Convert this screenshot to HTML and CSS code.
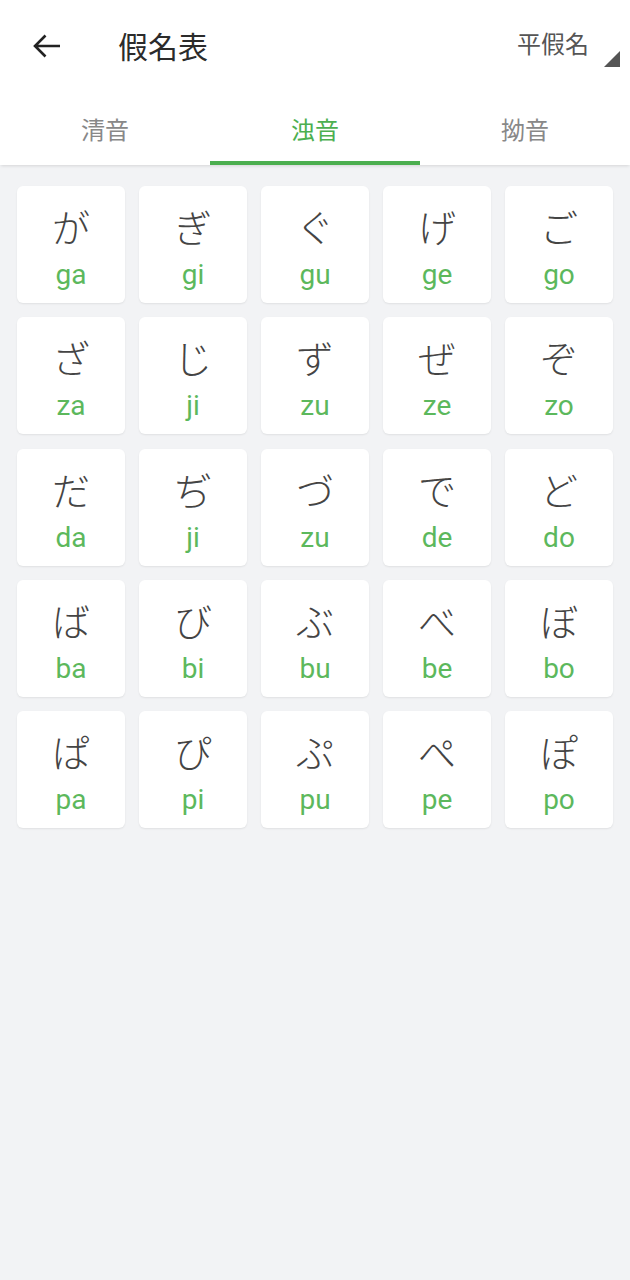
FILE: index.html
```html
<!DOCTYPE html>
<html lang="ja">
<head>
<meta charset="utf-8">
<title>假名表</title>
<link rel="stylesheet" href="styles.css">
</head>
<body>
<header class="appbar">
  <div class="back">
    <svg width="30" height="26" viewBox="0 0 30 26"><path d="M28 13 H3 M13.5 2.5 L3 13 L13.5 23.5" fill="none" stroke="#222" stroke-width="2.6" stroke-linecap="butt" stroke-linejoin="miter"/></svg>
  </div>
  <div class="title">假名表</div>
  <div class="spacer"></div>
  <div class="picker">
    <span class="picker-label">平假名</span>
    <svg class="picker-tri" width="16" height="16" viewBox="0 0 16 16"><polygon points="16,0 16,16 0,16" fill="#555"/></svg>
  </div>
</header>
<nav class="tabs">
  <div class="tab">清音</div>
  <div class="tab active">浊音</div>
  <div class="tab">拗音</div>
</nav>
<main class="grid">
  <div class="card"><span class="kana">が</span><span class="roma">ga</span></div>
  <div class="card"><span class="kana">ぎ</span><span class="roma">gi</span></div>
  <div class="card"><span class="kana">ぐ</span><span class="roma">gu</span></div>
  <div class="card"><span class="kana">げ</span><span class="roma">ge</span></div>
  <div class="card"><span class="kana">ご</span><span class="roma">go</span></div>
  <div class="card"><span class="kana">ざ</span><span class="roma">za</span></div>
  <div class="card"><span class="kana">じ</span><span class="roma">ji</span></div>
  <div class="card"><span class="kana">ず</span><span class="roma">zu</span></div>
  <div class="card"><span class="kana">ぜ</span><span class="roma">ze</span></div>
  <div class="card"><span class="kana">ぞ</span><span class="roma">zo</span></div>
  <div class="card"><span class="kana">だ</span><span class="roma">da</span></div>
  <div class="card"><span class="kana">ぢ</span><span class="roma">ji</span></div>
  <div class="card"><span class="kana">づ</span><span class="roma">zu</span></div>
  <div class="card"><span class="kana">で</span><span class="roma">de</span></div>
  <div class="card"><span class="kana">ど</span><span class="roma">do</span></div>
  <div class="card"><span class="kana">ば</span><span class="roma">ba</span></div>
  <div class="card"><span class="kana">び</span><span class="roma">bi</span></div>
  <div class="card"><span class="kana">ぶ</span><span class="roma">bu</span></div>
  <div class="card"><span class="kana">べ</span><span class="roma">be</span></div>
  <div class="card"><span class="kana">ぼ</span><span class="roma">bo</span></div>
  <div class="card"><span class="kana">ぱ</span><span class="roma">pa</span></div>
  <div class="card"><span class="kana">ぴ</span><span class="roma">pi</span></div>
  <div class="card"><span class="kana">ぷ</span><span class="roma">pu</span></div>
  <div class="card"><span class="kana">ぺ</span><span class="roma">pe</span></div>
  <div class="card"><span class="kana">ぽ</span><span class="roma">po</span></div>
</main>
</body>
</html>
```

FILE: styles.css
```css
* { box-sizing: border-box; }
html, body {
  margin: 0;
  padding: 0;
}
body {
  background: #f2f3f5;
  font-family: Roboto, "Noto Sans CJK SC", "Noto Sans CJK JP", sans-serif;
  width: 630px;
  min-height: 1280px;
}
.appbar {
  height: 92px;
  background: #fff;
  display: flex;
  align-items: center;
  position: relative;
  z-index: 2;
}
.back {
  width: 30px;
  height: 26px;
  margin-left: 32px;
  display: flex;
}
.title {
  margin-left: 56px;
  font-family: "Noto Sans CJK SC", sans-serif;
  font-size: 30px;
  color: #2b2b2b;
  line-height: 40px;
  margin-top: -2px;
}
.spacer { flex: 1; }
.picker {
  display: flex;
  align-items: flex-start;
  margin-right: 10px;
  height: 44px;
  margin-top: 2px;
}
.picker-label {
  font-family: "Noto Sans CJK SC", sans-serif;
  font-size: 24px;
  color: #555;
  line-height: 30px;
  margin-top: 3px;
}
.picker-tri {
  margin-left: 15px;
  margin-top: 26px;
}
.tabs {
  height: 73px;
  background: #fff;
  display: grid;
  grid-template-columns: repeat(3, 1fr);
  box-shadow: 0 2px 3px -1px rgba(0,0,0,0.12);
  position: relative;
  z-index: 1;
}
.tab {
  display: flex;
  align-items: center;
  justify-content: center;
  font-family: "Noto Sans CJK SC", sans-serif;
  font-size: 24px;
  color: #888;
  border-bottom: 4px solid transparent;
  padding-top: 3px;
}
.tab.active {
  color: #4caf50;
  border-bottom-color: #4caf50;
}
.grid {
  display: grid;
  grid-template-columns: repeat(5, 108px);
  column-gap: 14px;
  row-gap: 14.25px;
  padding: 21px 17px;
}
.card {
  height: 117px;
  background: #fff;
  border-radius: 6px;
  box-shadow: 0 1px 2px rgba(0,0,0,0.08);
  display: flex;
  flex-direction: column;
  align-items: center;
  padding-top: 16px;
}
.kana {
  font-family: "Noto Sans CJK JP", sans-serif;
  font-weight: 300;
  font-size: 38px;
  line-height: 48px;
  color: #444;
}
.roma {
  font-family: Roboto, sans-serif;
  font-size: 28px;
  line-height: 32px;
  color: #5cb85c;
  margin-top: 9px;
}
```
